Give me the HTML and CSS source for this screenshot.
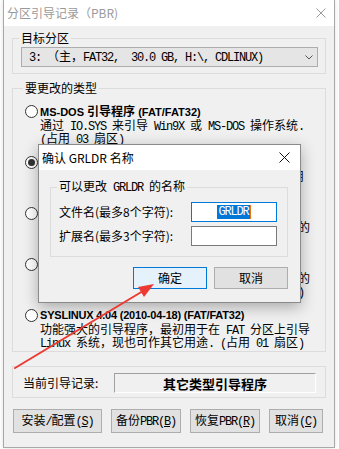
FILE: index.html
```html
<!DOCTYPE html>
<html lang="zh-CN">
<head>
<meta charset="utf-8">
<title>分区引导记录</title>
<link rel="stylesheet" href="styles.css">
</head>
<body>
<div class="win">
  <div class="titlebar">
    <span class="title">分区引导记录（PBR)</span>
    <svg class="close" width="10" height="10" viewBox="0 0 10 10"><path d="M0.5 0.5L9.5 9.5M9.5 0.5L0.5 9.5" stroke="#9a9a9a" stroke-width="1"/></svg>
  </div>
  <div class="body">
    <fieldset class="grp g-target">
      <legend>目标分区</legend>
      <div class="combo">
        <span class="ctext"><span class="l">3: </span>（主，<span class="l">FAT32,  30.0 GB, H:\, CDLINUX)</span></span>
        <svg width="8" height="5" viewBox="0 0 8 5"><path d="M0.5 0.5L4 4L7.5 0.5" stroke="#555" fill="none"/></svg>
      </div>
    </fieldset>

    <fieldset class="grp g-type">
      <legend>要更改的类型</legend>
      <div class="opt">
        <span class="radio"></span>
        <div class="otext">
          <div class="otitle">MS-DOS <span class="cj">引导程序</span> (FAT/FAT32)</div>
          <div class="desc">通过<span class="l"> IO.SYS </span>来引导<span class="l"> Win9X </span>或<span class="l"> MS-DOS </span>操作系统<span class="l">.</span></div>
          <div class="desc"><span class="l">(</span>占用<span class="l"> 03 </span>扇区<span class="l">)</span></div>
        </div>
      </div>
      <div class="opt">
        <span class="radio on"></span>
        <div class="otext">
          <div class="otitle">GRUB4DOS 0.4.5c/0.4.6a (FAT/FAT32/NTFS)</div>
          <div class="desc">通过<span class="l"> GRLDR </span>文件来引导多种操作系统<span class="l">,  </span>推荐使用</div>
          <div class="desc"><span class="l">(</span>占用<span class="l"> 18 </span>扇区<span class="l">)</span></div>
        </div>
      </div>
      <div class="opt">
        <span class="radio"></span>
        <div class="otext">
          <div class="otitle">NTLDR <span class="cj">引导程序</span> (FAT/FAT32/NTFS)</div>
          <div class="desc">用于引导<span class="l"> Windows NT/2000/XP/2003 </span>等操作系统的</div>
          <div class="desc">引导程序<span class="l"> (</span>占用<span class="l"> 04 </span>扇区<span class="l">)</span></div>
        </div>
      </div>
      <div class="opt">
        <span class="radio"></span>
        <div class="otext">
          <div class="otitle">BOOTMGR <span class="cj">引导程序</span> (FAT/FAT32/NTFS)</div>
          <div class="desc">用于引导<span class="l"> Windows Vista/7/2008 R2 </span>等操作系统的</div>
          <div class="desc">引导程序，需要<span class="l"> BOOTMGR </span>文件<span class="l"> (</span>占用<span class="l"> 04 </span>个扇区<span class="l">)</span></div>
        </div>
      </div>
      <div class="opt">
        <span class="radio"></span>
        <div class="otext">
          <div class="otitle sys">SYSLINUX 4.04 (2010-04-18) (FAT/FAT32)</div>
          <div class="desc">功能强大的引导程序，最初用于在<span class="l"> FAT </span>分区上引导</div>
          <div class="desc"><span class="l">Linux </span>系统，现也可作其它用途<span class="l">. (</span>占用<span class="l"> 01 </span>扇区<span class="l">)</span></div>
        </div>
      </div>
    </fieldset>

    <div class="grp g-cur">
      <span class="curlabel">当前引导记录:</span>
      <div class="curfield">其它类型引导程序</div>
    </div>

    <div class="btns">
      <button class="btn b1">安装<span class="l">/</span>配置<span class="l">(<u>S</u>)</span></button>
      <button class="btn b2">备份<span class="l">PBR(<u>B</u>)</span></button>
      <button class="btn b2">恢复<span class="l">PBR(<u>R</u>)</span></button>
      <button class="btn b3">取消<span class="l">(<u>C</u>)</span></button>
    </div>
  </div>
</div>

<div class="dlg">
  <div class="dtitle">
    <span>确认 GRLDR 名称</span>
    <svg width="11" height="11" viewBox="0 0 11 11"><path d="M0.5 0.5L10.5 10.5M10.5 0.5L0.5 10.5" stroke="#111" stroke-width="1"/></svg>
  </div>
  <div class="dbody">
    <fieldset class="grp g-name">
      <legend>可以更改<span class="l"> GRLDR </span>的名称</legend>
      <div class="frow">
        <span>文件名(最多8个字符):</span>
        <div class="inp focus"><span class="sel l">GRLDR</span><span class="caret"></span></div>
      </div>
      <div class="frow">
        <span>扩展名(最多3个字符):</span>
        <div class="inp"></div>
      </div>
    </fieldset>
    <div class="dbtns">
      <button class="btn dok">确定</button>
      <button class="btn dcancel">取消</button>
    </div>
  </div>
</div>

<svg class="arrow" width="339" height="449" viewBox="0 0 339 449">
  <line x1="15" y1="368" x2="143" y2="291" stroke="#ec3a32" stroke-width="2" stroke-linecap="round"/>
  <polygon points="154,284 144,297 138,287" fill="#ec3a32"/>
</svg>
</body>
</html>
```

FILE: styles.css
```css
* { box-sizing: border-box; }
html, body { margin: 0; padding: 0; }
body {
  width: 339px;
  height: 449px;
  overflow: hidden;
  position: relative;
  background: #ffffff;
  font-family: "Noto Sans CJK SC", sans-serif;
  font-size: 12px;
  color: #000;
}
.l {
  font-family: "Liberation Mono", "Noto Sans CJK SC", monospace;
  font-size: 12px;
  letter-spacing: -1.2px;
  white-space: pre;
}
.win {
  margin-left: 3px;
  width: 332px;
  height: 448px;
  border: 1px solid #a8a8a8;
  border-top: 0;
  background: #f0f0f0;
  display: flex;
  flex-direction: column;
  box-shadow: 0 0 5px rgba(0,0,0,0.12);
}
.titlebar {
  height: 26px;
  flex: none;
  background: #fff;
  display: flex;
  align-items: center;
  justify-content: space-between;
  padding: 0 8px 0 3px;
}
.title { color: #9a9a9a; line-height: 14px; }
.body {
  flex: 1;
  display: flex;
  flex-direction: column;
  padding: 5px 8px 0 8px;
}
.grp {
  margin: 0;
  border: 1px solid #dcdcdc;
  min-width: 0;
}
legend {
  padding: 0 2px;
  margin-left: -2px;
  font-size: 12px;
  line-height: 14px;
}
.g-target { padding: 2px 7px 6px 8px; }
.combo {
  height: 20px;
  border: 1px solid #adadad;
  background: #e5e5e5;
  display: flex;
  align-items: center;
  justify-content: space-between;
  padding: 0 4px 0 7px;
  line-height: 14px;
}
.g-type { margin-top: 7px; padding: 9px 8px 3px 12px; }
.opt { display: flex; height: 40px; }
.opt + .opt { margin-top: 11px; }
.radio {
  flex: none;
  width: 13px;
  height: 13px;
  margin-top: 1px;
  border: 1px solid #333;
  border-radius: 50%;
  background: #fff;
  display: flex;
  align-items: center;
  justify-content: center;
}
.radio.on::after {
  content: "";
  width: 7px;
  height: 7px;
  border-radius: 50%;
  background: #333;
}
.otext { margin-left: 2px; white-space: nowrap; }
.otitle {
  height: 14px;
  line-height: 14px;
  font-family: "Liberation Sans", "Noto Sans CJK SC", sans-serif;
  font-weight: bold;
  font-size: 11px;
}
.otitle.sys { letter-spacing: -0.2px; }
.cj { font-family: "Noto Sans CJK SC", sans-serif; font-size: 12px; }
.desc { height: 13px; line-height: 13px; }
.g-cur {
  margin-top: 14px;
  padding: 6px 9px 4px 10px;
  display: flex;
  align-items: center;
}
.curlabel { width: 91px; flex: none; line-height: 14px; }
.curfield {
  flex: 1;
  height: 20px;
  border-top: 1px solid #a0a0a0;
  border-left: 1px solid #a0a0a0;
  border-bottom: 1px solid #fff;
  border-right: 1px solid #fff;
  display: flex;
  align-items: center;
  justify-content: center;
  font-weight: bold;
  font-size: 13px;
}
.btns {
  margin-top: 11px;
  display: flex;
  justify-content: space-between;
  padding: 0 3px 0 1px;
}
.btn {
  height: 24px;
  padding: 0;
  margin: 0;
  border: 1px solid #adadad;
  background: #e1e1e1;
  font-family: "Noto Sans CJK SC", sans-serif;
  font-size: 12px;
  color: #000;
  line-height: 14px;
}
.b1 { width: 89px; }
.b2 { width: 70px; }
.b3 { width: 54px; }

.dlg {
  position: absolute;
  left: 38px;
  top: 144px;
  width: 263px;
  height: 159px;
  border: 1px solid #8a8a8a;
  background: #f0f0f0;
  box-shadow: 0 4px 14px rgba(0,0,0,0.3);
  display: flex;
  flex-direction: column;
}
.dtitle {
  height: 25px;
  flex: none;
  background: #fff;
  display: flex;
  align-items: center;
  justify-content: space-between;
  padding: 0 10px 0 3px;
  line-height: 14px;
}
.dbody { padding: 9px 12px 0 11px; }
.g-name { padding: 7px 10px 10px 8px; }
.frow {
  display: flex;
  align-items: center;
  justify-content: space-between;
  height: 20px;
  line-height: 14px;
}
.frow + .frow { margin-top: 4px; }
.inp {
  width: 86px;
  height: 20px;
  border: 1px solid #7a7a7a;
  background: #fff;
  display: flex;
  align-items: center;
  justify-content: center;
}
.inp.focus { border-color: #0078d7; }
.sel {
  background: #0078d7;
  color: #fff;
  line-height: 14px;
  padding-left: 1px;
  padding-right: 1px;
}
.caret { width: 1px; height: 14px; background: #e8741c; }
.dbtns {
  margin-top: 10px;
  display: flex;
  justify-content: flex-end;
  gap: 7px;
}
.dok, .dcancel { width: 74px; height: 22px; }
.dok { border-color: #0078d7; background: #e5f1fb; }
.arrow { position: absolute; left: 0; top: 0; pointer-events: none; }
```
